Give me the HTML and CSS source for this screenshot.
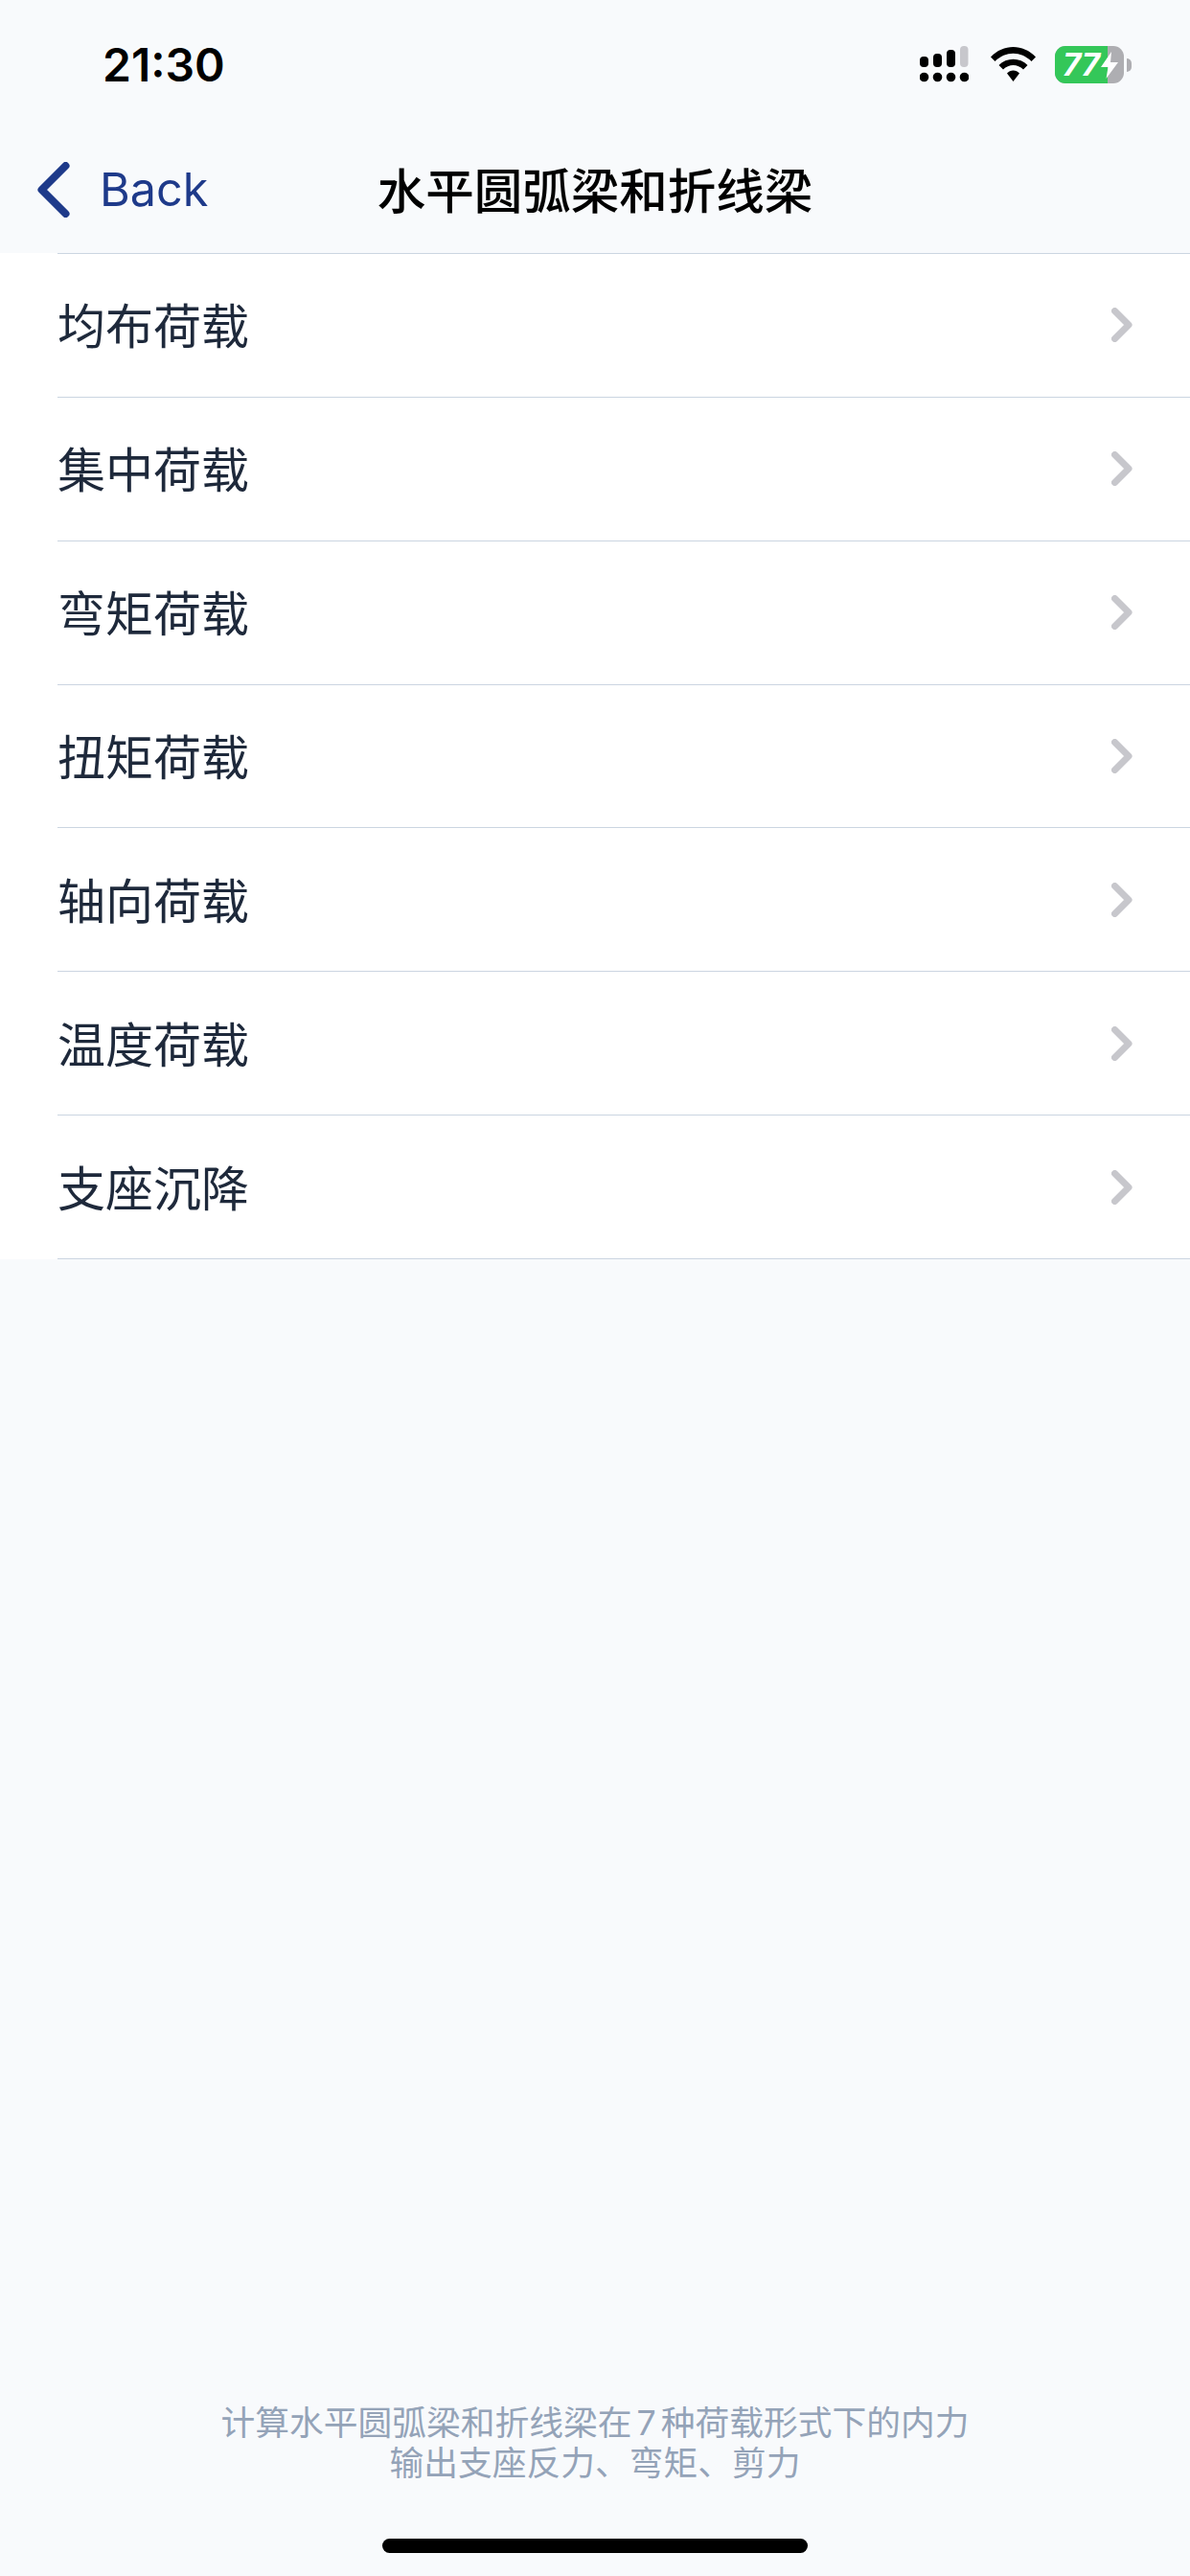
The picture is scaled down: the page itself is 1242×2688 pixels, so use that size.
FILE: index.html
```html
<!DOCTYPE html>
<html lang="zh">
<head>
<meta charset="UTF-8">
<title>水平圆弧梁和折线梁</title>
<link rel="stylesheet" href="styles.css">
</head>
<body>
	<div id="container">
		<div class="statusbar">
			<span class="time">21:30</span>
			<div class="status-icons">
				<svg class="signal" width="51" height="38" viewBox="0 0 51 38">
					<rect x="42" y="0" width="8.500" height="22" rx="4" fill="#c7c7cc"/>
					<rect x="28" y="4" width="9" height="18" rx="4" fill="#000"/>
					<rect x="14" y="8" width="9" height="14" rx="4" fill="#000"/>
					<rect x="0" y="11" width="9" height="11" rx="4" fill="#000"/>
					<circle cx="4.500" cy="32.500" r="4.800" fill="#000"/>
					<circle cx="18.500" cy="32.500" r="4.800" fill="#000"/>
					<circle cx="32.500" cy="32.500" r="4.800" fill="#000"/>
					<circle cx="46.500" cy="32.500" r="4.800" fill="#000"/>
				</svg>
				<svg class="wifi" width="47" height="36" viewBox="0 0 47 36">
					<path d="M0 10.500 C13 -3.500 34 -3.500 47 10.500 L42.500 15 C31.500 4 15.500 4 4.500 15 Z" fill="#000"/>
					<path d="M8.500 19 C16.500 10.500 30.500 10.500 38.500 19 L34 23.500 C28 17.500 19 17.500 13 23.500 Z" fill="#000"/>
					<path d="M17 27.500 C20.500 23.500 26.500 23.500 30 27.500 L23.500 36 Z" fill="#000"/>
				</svg>
				<div class="battery">
					<div class="battery-body">
						<div class="battery-fill"></div>
						<span class="battery-num">77</span>
						<svg class="bolt" width="18" height="28" viewBox="0 0 18 28">
							<path d="M11 0 L0 16 L7.500 16 L5.500 28 L18 11 L10 11 Z" fill="#fff"/>
						</svg>
					</div>
					<div class="battery-tip"></div>
				</div>
			</div>
		</div>

		<div class="navbar">
			<div class="back">
				<svg width="34" height="58" viewBox="0 0 34 58">
					<path d="M29.500 4 L4.500 29 L29.500 54" fill="none" stroke="#1e3a8a" stroke-width="8" stroke-linecap="round" stroke-linejoin="round"/>
				</svg>
				<span class="back-text">Back</span>
			</div>
			<div class="title">水平圆弧梁和折线梁</div>
		</div>

		<ul class="menu">
			<li><span>均布荷载</span><svg class="arrow" width="22" height="36" viewBox="0 0 22 36"><path d="M3.500 3.500 L18 18 L3.500 32.500" fill="none" stroke="#c7c7cc" stroke-width="7" stroke-linecap="round" stroke-linejoin="round"/></svg></li>
			<li><span>集中荷载</span><svg class="arrow" width="22" height="36" viewBox="0 0 22 36"><path d="M3.500 3.500 L18 18 L3.500 32.500" fill="none" stroke="#c7c7cc" stroke-width="7" stroke-linecap="round" stroke-linejoin="round"/></svg></li>
			<li><span>弯矩荷载</span><svg class="arrow" width="22" height="36" viewBox="0 0 22 36"><path d="M3.500 3.500 L18 18 L3.500 32.500" fill="none" stroke="#c7c7cc" stroke-width="7" stroke-linecap="round" stroke-linejoin="round"/></svg></li>
			<li><span>扭矩荷载</span><svg class="arrow" width="22" height="36" viewBox="0 0 22 36"><path d="M3.500 3.500 L18 18 L3.500 32.500" fill="none" stroke="#c7c7cc" stroke-width="7" stroke-linecap="round" stroke-linejoin="round"/></svg></li>
			<li><span>轴向荷载</span><svg class="arrow" width="22" height="36" viewBox="0 0 22 36"><path d="M3.500 3.500 L18 18 L3.500 32.500" fill="none" stroke="#c7c7cc" stroke-width="7" stroke-linecap="round" stroke-linejoin="round"/></svg></li>
			<li><span>温度荷载</span><svg class="arrow" width="22" height="36" viewBox="0 0 22 36"><path d="M3.500 3.500 L18 18 L3.500 32.500" fill="none" stroke="#c7c7cc" stroke-width="7" stroke-linecap="round" stroke-linejoin="round"/></svg></li>
			<li><span>支座沉降</span><svg class="arrow" width="22" height="36" viewBox="0 0 22 36"><path d="M3.500 3.500 L18 18 L3.500 32.500" fill="none" stroke="#c7c7cc" stroke-width="7" stroke-linecap="round" stroke-linejoin="round"/></svg></li>
		</ul>

		<div class="footer">
			<p>计算水平圆弧梁和折线梁在<span class="num">7</span>种荷载形式下的内力</p>
			<p>输出支座反力、弯矩、剪力</p>
		</div>
		<div class="homebar"></div>
	</div>
</body>
</html>
```

FILE: styles.css
```css
body {
	margin: 0;
	padding: 0;
	background-color: #f8fafc;
	font-family: Inter, "Noto Sans CJK SC", sans-serif;
}

#container {
	width: 1242px;
	height: 2688px;
	display: flex;
	flex-direction: column;
	overflow: hidden;
}

.statusbar {
	height: 134px;
	padding: 0 61px 0 107px;
	display: flex;
	align-items: flex-start;
	justify-content: space-between;
	box-sizing: border-box;
}

.time {
	margin-top: 38px;
	font-size: 48px;
	line-height: 60px;
	font-weight: 600;
	color: #000;
}

.status-icons {
	display: flex;
	align-items: flex-start;
	margin-top: 48px;
}

.signal {
	margin-right: 23px;
}

.wifi {
	margin-top: 1px;
	margin-right: 20px;
}

.battery {
	display: flex;
	align-items: center;
}

.battery-body {
	width: 72px;
	height: 39px;
	border-radius: 11px;
	background-color: #aeaeb2;
	overflow: hidden;
	position: relative;
	display: flex;
	align-items: center;
}

.battery-fill {
	position: absolute;
	left: 0;
	top: 0;
	width: 55px;
	height: 39px;
	background-color: #34c759;
}

.battery-num {
	position: relative;
	margin-left: 8px;
	font-size: 33px;
	line-height: 39px;
	font-weight: 700;
	font-style: italic;
	color: #fff;
}

.bolt {
	position: relative;
	margin-left: 1px;
}

.battery-tip {
	width: 5px;
	height: 14px;
	margin-left: 3px;
	border-radius: 0 7px 7px 0;
	background-color: #aeaeb2;
}

.navbar {
	height: 130px;
	position: relative;
	display: flex;
	align-items: center;
	justify-content: center;
}

.back {
	position: absolute;
	left: 39px;
	top: 34px;
	display: flex;
	align-items: center;
	gap: 31px;
}

.back-text {
	font-size: 48.500px;
	line-height: 60px;
	color: #1e3a8a;
}

.title {
	margin-top: 2px;
	font-size: 50.500px;
	line-height: 60px;
	font-weight: 500;
	color: #000;
}

.menu {
	list-style-type: none;
	margin: 0;
	padding: 0 0 0 60px;
	background-color: #fff;
	box-sizing: border-box;
}

.menu li {
	height: 149.860px;
	padding-right: 60px;
	box-sizing: border-box;
	border-top: 1px solid #cbd5e1;
	display: flex;
	align-items: center;
	justify-content: space-between;
	font-size: 50px;
	color: #1e293b;
}

.menu li span {
	margin-bottom: 4px;
}

.menu li:last-child {
	height: 150.860px;
	border-bottom: 1px solid #cbd5e1;
}

.footer {
	margin-top: auto;
	text-align: center;
	font-size: 35.750px;
	line-height: 42px;
	color: #94a3b8;
}

.footer p {
	margin: 0;
}

.num {
	margin: 0 5px;
}

.homebar {
	width: 444px;
	height: 15px;
	margin: 58px auto 24px;
	border-radius: 8px;
	background-color: #000;
}
```
